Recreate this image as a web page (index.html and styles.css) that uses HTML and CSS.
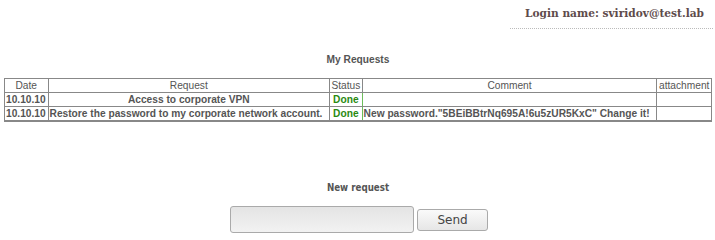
FILE: index.html
```html
<!DOCTYPE html>
<html lang="en">

<head>
    <meta charset="UTF-8">
    <title>My Requests</title>
    <link rel="stylesheet" href="styles.css">
</head>

<body>
    <div class="header">
        <div class="login">Login name: sviridov@test.lab</div>
    </div>

    <h3 class="title">My Requests</h3>
    <table class="requests">
        <tr>
            <th class="date">Date</th>
            <th>Request</th>
            <th>Status</th>
            <th>Comment</th>
            <th>attachment</th>
        </tr>
        <tr>
            <td>10.10.10</td>
            <td class="center">Access to corporate VPN</td>
            <td class="done">Done</td>
            <td></td>
            <td></td>
        </tr>
        <tr>
            <td>10.10.10</td>
            <td>Restore the password to my corporate network account.</td>
            <td class="done">Done</td>
            <td>New password."5BEiBBtrNq695A!6u5zUR5KxC" Change it!</td>
            <td></td>
        </tr>
    </table>

    <form class="new-request">
        <h3 class="title">New request</h3>
        <div class="row">
            <input type="text" class="request-text">
            <button type="button" class="send">Send</button>
        </div>
    </form>
</body>

</html>
```

FILE: styles.css
```css
body {
    margin: 0;
    padding: 0 3px 0 4px;
    background-color: white;
    font-family: "Liberation Sans", Arial, sans-serif;
    color: #555;
}

.header {
    display: flex;
    justify-content: flex-end;
    padding-top: 5px;
    margin-right: -1px;
}

.login {
    font-family: "DejaVu Serif", serif;
    font-weight: bold;
    font-size: 10.6px;
    color: #5e4b4b;
    width: 197px;
    text-align: center;
    padding: 2px 0 9px 6px;
    border-bottom: 1px dotted #bbb;
}

.title {
    font-size: 10.2px;
    font-weight: bold;
    text-align: center;
    margin: 25px 0 13px;
}

.requests {
    width: 100%;
    border-collapse: collapse;
    border: 1px solid #888;
    border-bottom-width: 2px;
    font-size: 10.2px;
    font-weight: bold;
}

.requests th,
.requests td {
    border: 1px solid #888;
    padding: 0 1px;
    height: 13px;
    white-space: nowrap;
}

.requests th {
    font-weight: normal;
}

.requests .center {
    text-align: center;
}

.requests .done {
    color: #2a8a10;
    text-align: center;
    border-right-color: #6cbd5a;
}

.new-request {
    margin-top: 60px;
}

.new-request .title {
    font-family: "DejaVu Sans Condensed", "DejaVu Sans", sans-serif;
    font-size: 9.7px;
    margin: 0 0 13px;
}

.row {
    display: flex;
    justify-content: center;
    align-items: center;
    gap: 3px;
    padding-left: 2px;
}

.request-text {
    width: 182px;
    height: 25px;
    border: 1px solid #aaa;
    border-radius: 3px;
    background: linear-gradient(#e4e4e4, #f2f2f2);
    padding: 0;
}

.send {
    width: 71px;
    height: 22px;
    border: 1px solid #aaa;
    border-radius: 3px;
    background: linear-gradient(#fafafa, #e6e6e6);
    font-family: "DejaVu Sans", sans-serif;
    font-size: 12px;
    color: #444;
    cursor: pointer;
}
```
